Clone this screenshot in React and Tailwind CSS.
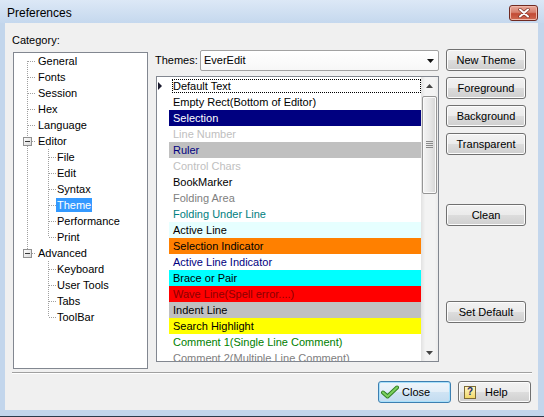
import React from 'react';

const treeItems = [
  { t: 'General', l: 0 },
  { t: 'Fonts', l: 0 },
  { t: 'Session', l: 0 },
  { t: 'Hex', l: 0 },
  { t: 'Language', l: 0 },
  { t: 'Editor', l: 0 },
  { t: 'File', l: 1 },
  { t: 'Edit', l: 1 },
  { t: 'Syntax', l: 1 },
  { t: 'Theme', l: 1, sel: true },
  { t: 'Performance', l: 1 },
  { t: 'Print', l: 1 },
  { t: 'Advanced', l: 0 },
  { t: 'Keyboard', l: 1 },
  { t: 'User Tools', l: 1 },
  { t: 'Tabs', l: 1 },
  { t: 'ToolBar', l: 1 },
];

const rows = [
  { t: 'Default Text', cls: 'text-black', focus: true },
  { t: 'Empty Rect(Bottom of Editor)', cls: 'text-black' },
  { t: 'Selection', cls: 'bg-[#000080] text-white' },
  { t: 'Line Number', cls: 'text-[#c0c0c0]' },
  { t: 'Ruler', cls: 'bg-[#c0c0c0] text-[#000080]' },
  { t: 'Control Chars', cls: 'text-[#c0c0c0]' },
  { t: 'BookMarker', cls: 'text-black' },
  { t: 'Folding Area', cls: 'text-[#808080]' },
  { t: 'Folding Under Line', cls: 'text-[#008080]' },
  { t: 'Active Line', cls: 'bg-[#e6ffff] text-black' },
  { t: 'Selection Indicator', cls: 'bg-[#ff8000] text-black' },
  { t: 'Active Line Indicator', cls: 'text-[#000080]' },
  { t: 'Brace or Pair', cls: 'bg-[#00ffff] text-black' },
  { t: 'Wave Line(Spell error....)', cls: 'bg-[#ff0000] text-[#8b0000]' },
  { t: 'Indent Line', cls: 'bg-[#c0c0c0] text-black' },
  { t: 'Search Highlight', cls: 'bg-[#ffff00] text-black' },
  { t: 'Comment 1(Single Line Comment)', cls: 'text-[#008000]' },
  { t: 'Comment 2(Multiple Line Comment)', cls: 'text-[#808080]' },
];

function TreeLines() {
  const rootRows = [0, 1, 2, 3, 4];
  const kids = [6, 7, 8, 9, 10, 11, 13, 14, 15, 16];
  const c = (i) => i * 16 + 8.5;
  const dot = { stroke: '#a0a0a0', strokeWidth: 1, strokeDasharray: '1 1', shapeRendering: 'crispEdges' };
  return (
    <svg className="absolute left-0 top-0" width="133" height="315">
      <line x1="13.5" y1="8" x2="13.5" y2="84" {...dot} />
      <line x1="13.5" y1="93" x2="13.5" y2="196" {...dot} />
      {rootRows.map((i) => (
        <line key={i} x1="14" y1={c(i)} x2="22" y2={c(i)} {...dot} />
      ))}
      <line x1="18" y1={c(5)} x2="22" y2={c(5)} {...dot} />
      <line x1="18" y1={c(12)} x2="22" y2={c(12)} {...dot} />
      <line x1="34.5" y1="96" x2="34.5" y2="184" {...dot} />
      <line x1="34.5" y1="208" x2="34.5" y2="264" {...dot} />
      {kids.map((i) => (
        <line key={i} x1="35" y1={c(i)} x2="42" y2={c(i)} {...dot} />
      ))}
      {[5, 12].map((i) => (
        <g key={i}>
          <defs>
            <linearGradient id={'bx' + i} x1="0" y1="0" x2="1" y2="1">
              <stop offset="0" stopColor="#ffffff" />
              <stop offset="1" stopColor="#d8d8d8" />
            </linearGradient>
          </defs>
          <rect x="9.5" y={i * 16 + 4.5} width="8" height="8" fill={'url(#bx' + i + ')'} stroke="#919191" shapeRendering="crispEdges" />
          <line x1="11" y1={c(i)} x2="16" y2={c(i)} stroke="#3a3a3a" shapeRendering="crispEdges" />
        </g>
      ))}
    </svg>
  );
}

function Btn({ children, className = '' }) {
  return (
    <div
      className={`h-[22px] w-[80px] rounded-[3px] border border-[#707070] bg-[linear-gradient(to_bottom,#f2f2f2_0%,#ebebeb_50%,#dddddd_50%,#cfcfcf_100%)] shadow-[inset_0_0_0_1px_#fcfcfc] flex items-center justify-center text-[11px] text-black ${className}`}
    >
      {children}
    </div>
  );
}

function Scrollbar() {
  return (
    <div className="w-[17px] h-full flex flex-col bg-[linear-gradient(to_right,#e2e2e2,#f3f3f3_25%,#f3f3f3_80%,#ebebeb)]">
      <div className="h-[17px] flex items-center justify-center">
        <svg width="7" height="4"><polygon points="3.5,0 7,4 0,4" fill="#444" /></svg>
      </div>
      <div className="mt-[2px] mx-[1px] h-[98px] rounded-[2px] border border-[#959595] bg-[linear-gradient(to_right,#f4f4f4,#e8e8e8_50%,#d6d6d6)] shadow-[inset_0_0_0_1px_#fafafa] flex items-center justify-center">
        <svg width="7" height="8">
          <line x1="0" y1="0.5" x2="7" y2="0.5" stroke="#8a8a8a" />
          <line x1="0" y1="2.5" x2="7" y2="2.5" stroke="#8a8a8a" />
          <line x1="0" y1="4.5" x2="7" y2="4.5" stroke="#8a8a8a" />
          <line x1="0" y1="6.5" x2="7" y2="6.5" stroke="#8a8a8a" />
        </svg>
      </div>
      <div className="flex-1" />
      <div className="h-[17px] flex items-center justify-center">
        <svg width="7" height="4"><polygon points="0,0 7,0 3.5,4" fill="#444" /></svg>
      </div>
    </div>
  );
}

export default function App() {
  return (
    <div className="w-[544px] h-[417px] flex flex-col bg-[#c3d6ec] border-b border-[#2d3b4c] font-['Liberation_Sans',Arial,sans-serif] text-[11px] text-black select-none overflow-hidden">
      {/* title bar */}
      <div className="h-[23px] shrink-0 flex items-center pt-[2px] pl-[7px] pr-[6px] bg-[linear-gradient(to_bottom,#dce8f6,#c5d8ee)]">
        <span className="text-[12px] leading-none">Preferences</span>
        <div className="ml-auto w-[29px] h-[16px] rounded-[3px] border border-[#6f2a22] bg-[linear-gradient(to_bottom,#e9a99b_0%,#d7806e_45%,#c24a35_55%,#cf6a52_100%)] shadow-[inset_0_0_0_1px_#f0b8aa] flex items-center justify-center">
          <svg width="12" height="10" viewBox="0 0 12 10">
            <path d="M2 1.5 L10 8.5 M10 1.5 L2 8.5" stroke="#7a3327" strokeWidth="3.4" strokeLinecap="round" />
            <path d="M2 1.5 L10 8.5 M10 1.5 L2 8.5" stroke="#ffffff" strokeWidth="2" strokeLinecap="round" />
          </svg>
        </div>
      </div>

      {/* client */}
      <div className="flex-1 ml-[5px] mr-[6px] mb-[6px] bg-[#f0f0f0] flex flex-col">
        <div className="flex pl-[7px] pt-[11px]">
          {/* category */}
          <div className="flex flex-col w-[136px]">
            <div className="h-[18px] leading-[13px]">Category:</div>
            <div className="ml-[1px] w-[135px] h-[317px] border border-[#828790] bg-white relative overflow-hidden">
              <TreeLines />
              <div className="relative flex flex-col">
                {treeItems.map((it) => (
                  <div key={it.t} className={`h-[16px] flex items-center ${it.l ? 'pl-[42px]' : 'pl-[23px]'}`}>
                    <span className={`px-[1px] leading-[14px] ${it.sel ? 'bg-[#3399ff] text-white' : ''}`}>{it.t}</span>
                  </div>
                ))}
              </div>
            </div>
          </div>

          {/* middle */}
          <div className="ml-[7px] w-[284px] mt-[16px] flex flex-col">
            <div className="flex items-center h-[21px]">
              <span className="w-[45px]">Themes:</span>
              <div className="w-[239px] h-[21px] rounded-[2px] border border-[#a2a2a2] bg-[linear-gradient(to_bottom,#ffffff,#f7f7f7)] flex items-center pl-[3px] pr-[4px]">
                <span>EverEdit</span>
                <svg className="ml-auto" width="7" height="4"><polygon points="0,0 7,0 3.5,4" fill="#111" /></svg>
              </div>
            </div>
            <div className="mt-[5px] ml-[1px] w-[283px] h-[286px] border border-[#828790] bg-white flex">
              <div className="w-[264px] flex flex-col pt-[1px] overflow-hidden">
                {rows.map((r, i) => (
                  <div key={r.t} className="flex h-[16px] shrink-0">
                    <div className="w-[12px] flex items-center">
                      {i === 0 && (
                        <svg width="12" height="16"><polygon points="1,4 5,8 1,12" fill="#1a1a2e" /></svg>
                      )}
                    </div>
                    <div className={`w-[252px] leading-[16px] whitespace-nowrap ${r.cls}`}>
                      {r.focus ? (
                        <div className="ml-[3px] mt-[1px] h-[14px] border border-dotted border-black leading-[12px] pl-[0px]">{r.t}</div>
                      ) : (
                        <div className="pl-[4px]">{r.t}</div>
                      )}
                    </div>
                  </div>
                ))}
              </div>
              <Scrollbar />
            </div>
          </div>

          {/* buttons */}
          <div className="ml-[7px] mt-[15px] flex flex-col w-[80px]">
            <Btn>New Theme</Btn>
            <Btn className="mt-[6px]">Foreground</Btn>
            <Btn className="mt-[6px]">Background</Btn>
            <Btn className="mt-[6px]">Transparent</Btn>
            <Btn className="mt-[49px]">Clean</Btn>
            <Btn className="mt-[75px]">Set Default</Btn>
          </div>
        </div>

        {/* separator */}
        <div className="mt-[3px] ml-[7px] mr-[6px] h-[2px] border-t border-[#a0a0a0] border-b border-b-white" />

        {/* bottom buttons */}
        <div className="mt-[7px] flex justify-end pr-[7px] gap-[7px]">
          <div className="h-[22px] w-[73px] rounded-[3px] border border-[#3c7fb1] bg-[linear-gradient(to_bottom,#eef5fb_0%,#e2eef8_50%,#d0e4f4_50%,#c3dcf0_100%)] shadow-[inset_0_0_0_1px_#a8e0fb] flex items-center pl-[2px] gap-[3px]">
            <svg width="18" height="14" viewBox="0 0 18 14">
              <path d="M2 7.5 L6.5 11.5 L16 2.5" fill="none" stroke="#2f7d22" strokeWidth="4" strokeLinecap="round" strokeLinejoin="round" />
              <path d="M2 7.5 L6.5 11.5 L16 2.5" fill="none" stroke="#7cd05e" strokeWidth="2.2" strokeLinecap="round" strokeLinejoin="round" />
            </svg>
            <span>Close</span>
          </div>
          <div className="h-[22px] w-[73px] rounded-[3px] border border-[#707070] bg-[linear-gradient(to_bottom,#f2f2f2_0%,#ebebeb_50%,#dddddd_50%,#cfcfcf_100%)] shadow-[inset_0_0_0_1px_#fcfcfc] flex items-center pl-[5px]">
            <div className="w-[12px] h-[13px] border border-[#7d6a35] bg-[linear-gradient(to_bottom,#fff6c4,#f2d96a)] flex items-center justify-center text-[10px] font-bold leading-none text-[#1c2a6b]">?</div>
            <span className="ml-[9px]">Help</span>
          </div>
        </div>
      </div>
    </div>
  );
}
